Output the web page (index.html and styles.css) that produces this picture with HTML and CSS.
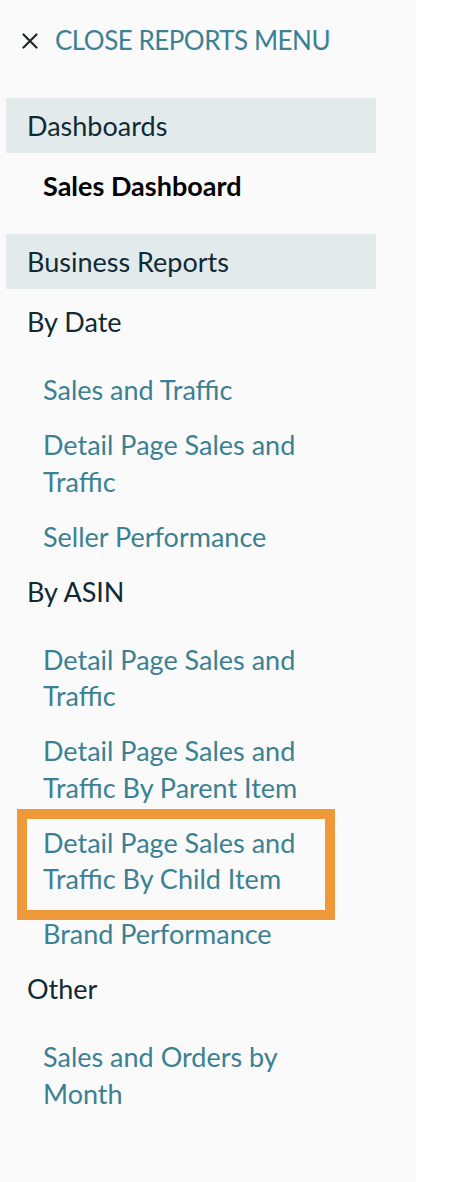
FILE: index.html
```html
<!DOCTYPE html>
<html lang="en">
<head>
<meta charset="utf-8">
<title>Reports menu</title>
<link rel="stylesheet" href="styles.css">
</head>
<body>
<nav class="sidebar">
  <a class="close-row" href="#">
    <svg class="close-icon" width="16" height="16" viewBox="0 0 16 16" aria-hidden="true">
      <path d="M1.5 1.5 L14.5 14.5 M14.5 1.5 L1.5 14.5" stroke="#1b2a30" stroke-width="2.2" stroke-linecap="round" fill="none"/>
    </svg>
    <span class="close-text">CLOSE REPORTS MENU</span>
  </a>

  <section class="group">
    <h2 class="section-header">Dashboards</h2>
    <a class="item item-active" href="#">Sales Dashboard</a>
  </section>

  <section class="group">
    <h2 class="section-header">Business Reports</h2>

    <h3 class="subheading first">By Date</h3>
    <a class="item link" href="#"><span class="label">Sales and Traffic</span></a>
    <a class="item link" href="#"><span class="label">Detail Page Sales and Traffic</span></a>
    <a class="item link" href="#"><span class="label">Seller Performance</span></a>

    <h3 class="subheading">By ASIN</h3>
    <a class="item link" href="#"><span class="label">Detail Page Sales and Traffic</span></a>
    <a class="item link" href="#"><span class="label">Detail Page Sales and Traffic By Parent Item</span></a>
    <a class="item link highlighted" href="#"><span class="label">Detail Page Sales and Traffic By Child Item</span></a>
    <a class="item link" href="#"><span class="label">Brand Performance</span></a>

    <h3 class="subheading">Other</h3>
    <a class="item link" href="#"><span class="label">Sales and Orders by Month</span></a>
  </section>
</nav>
</body>
</html>
```
FILE: styles.css
```css
html, body {
  margin: 0;
  padding: 0;
  background: #ffffff;
}

body {
  font-family: Lato, "Open Sans", sans-serif;
  font-size: 27px;
  color: #0f2a33;
}

.sidebar {
  width: 416px;
  min-height: 1182px;
  box-sizing: border-box;
  background: #fafafa;
  padding: 22px 40px 0 6px;
  display: flex;
  flex-direction: column;
}

a {
  text-decoration: none;
}

.close-row {
  display: flex;
  align-items: center;
  gap: 17px;
  height: 37px;
  margin: 0 0 39px 16px;
  color: #3b8193;
}

.close-icon {
  flex: none;
  display: block;
}

.close-text {
  font-size: 26px;
  letter-spacing: -0.5px;
  line-height: 37px;
}

.group {
  display: flex;
  flex-direction: column;
  margin-bottom: 20px;
}

.section-header {
  margin: 0 0 6px 0;
  height: 55px;
  line-height: 55px;
  padding-left: 21px;
  background: #e3eaec;
  font-size: 27px;
  font-weight: 400;
  color: #0f2a33;
}

.subheading {
  margin: 0 0 13px 0;
  padding: 9.25px 0 9.25px 21px;
  line-height: 36.5px;
  font-size: 27px;
  font-weight: 400;
  color: #0f2a33;
}

.item {
  display: block;
  position: relative;
  padding: 9.25px 0 9.25px 37px;
  line-height: 36.5px;
}

.item-active {
  color: #000000;
  font-weight: 700;
}

.link {
  color: #3b8193;
}

.label {
  display: block;
  max-width: 285px;
}

.highlighted::after {
  content: "";
  position: absolute;
  top: -7px;
  bottom: -13px;
  left: 11px;
  width: 318px;
  border: 10px solid #f0993a;
  box-sizing: border-box;
  pointer-events: none;
}
```
